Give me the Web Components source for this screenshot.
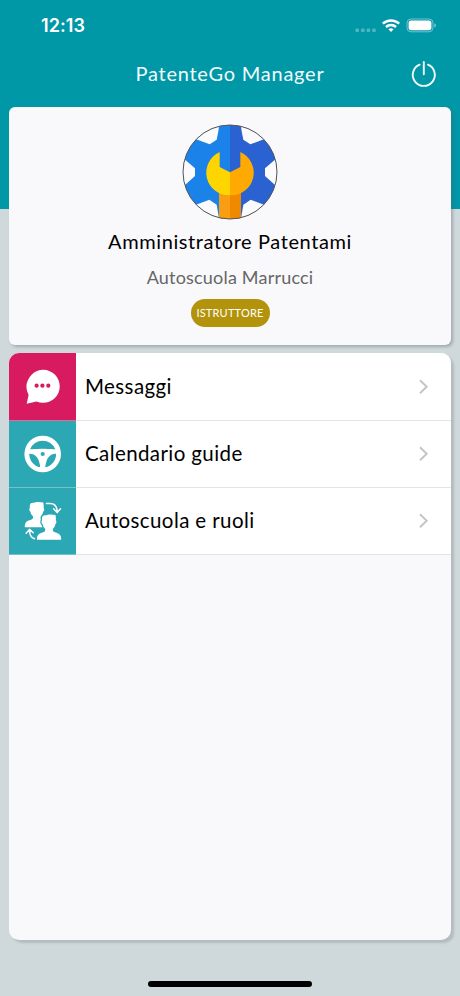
<!DOCTYPE html>
<html lang="it">
<head>
<meta charset="utf-8">
<title>PatenteGo Manager</title>
<style>
  html, body {
    height: 100%;
  }
  body {
    margin: 0;
    overflow: hidden;
    font-family: Lato, "Liberation Sans", sans-serif;
  }
</style>
</head>
<body>
<manager-app></manager-app>

<script>
class StatusBar extends HTMLElement {
  constructor(){
    super();
    this._root = this.attachShadow({mode: 'open'});
  }

  connectedCallback(){
    this._root.innerHTML = `
    <style>
      :host {
        display: flex;
        align-items: center;
        justify-content: space-between;
        box-sizing: border-box;
        height: 51px;
        padding: 0 22px 0 41px;
        color: #fff;
      }
      .time {
        font: 600 18px/50px Inter, sans-serif;
        letter-spacing: 0.1px;
      }
      svg {
        display: block;
      }
    </style>
    <span class="time">${this.getAttribute('time')}</span>
    <svg width="84" height="20" viewBox="0 0 84 20" fill="#fff">
      <g opacity=".3">
        <rect x="1.400" y="12.500" width="3.600" height="3.600" rx="1"/>
        <rect x="7" y="12.500" width="3.600" height="3.600" rx="1"/>
        <rect x="12.600" y="12.500" width="3.600" height="3.600" rx="1"/>
        <rect x="18.200" y="12.500" width="3.600" height="3.600" rx="1"/>
      </g>
      <g fill="none" stroke="#fff" stroke-width="2.500">
        <path d="M28.800 7.600a12.100 12.100 0 0 1 16.400 0"/>
        <path d="M32 11a7.400 7.400 0 0 1 10 0"/>
      </g>
      <path d="M34.400 13.300a4 4 0 0 1 5.200 0L37 16z"/>
      <rect x="53" y="3" width="26" height="12.800" rx="4" fill="none" stroke="#fff" stroke-opacity=".45"/>
      <rect x="54.600" y="4.600" width="22.800" height="9.600" rx="2.600"/>
      <path d="M80.400 7.200q1.600.8 1.600 2.200t-1.600 2.200z" opacity=".5"/>
    </svg>`;
  }
}

class NavBar extends HTMLElement {
  constructor(){
    super();
    this._root = this.attachShadow({mode: 'open'});
  }

  connectedCallback(){
    this._root.innerHTML = `
    <style>
      :host {
        display: grid;
        grid-template-columns: 44px 1fr 44px;
        align-items: center;
        height: 46px;
        padding: 0 14px;
        color: #f1fbfc;
      }
      .title {
        padding-bottom: 2px;
        text-align: center;
        font-size: 20px;
        line-height: 26px;
        letter-spacing: 0.75px;
      }
      button {
        display: flex;
        justify-content: center;
        padding: 0;
        border: 0;
        background: none;
        color: inherit;
      }
    </style>
    <span></span>
    <span class="title"><slot></slot></span>
    <button aria-label="Esci">
      <svg width="28" height="28" viewBox="0 0 28 28" fill="none" stroke="currentColor" stroke-width="1.900" stroke-linecap="round">
        <path d="M13.800 2v12.200M9.600 4.700a11 11 0 1 0 8.400 0"/>
      </svg>
    </button>`;
  }
}

class ProfileCard extends HTMLElement {
  constructor(){
    super();
    this._root = this.attachShadow({mode: 'open'});
  }

  connectedCallback(){
    this._root.innerHTML = `
    <style>
      :host {
        display: flex;
        flex-direction: column;
        align-items: center;
        box-sizing: border-box;
        height: 238px;
        padding-top: 17px;
        border-radius: 6px;
        background: #f9f9fc;
        box-shadow: 2px 2px 3px rgba(80, 95, 100, .35);
      }
      svg {
        display: block;
      }
      .name {
        margin-top: 7px;
        font-size: 20px;
        line-height: 28px;
        letter-spacing: 0.6px;
        color: #000;
      }
      .school {
        margin-top: 9px;
        font-size: 18px;
        line-height: 26px;
        letter-spacing: 0.2px;
        color: #666;
      }
      .role {
        margin-top: 9px;
        width: 79px;
        height: 28px;
        border-radius: 14px;
        background: #b3930b;
        color: #fff;
        text-align: center;
        font-size: 11px;
        line-height: 28px;
        letter-spacing: 0.2px;
      }
    </style>
    <svg width="96" height="96" viewBox="37 26 288 288">
      <clipPath id="round"><circle cx="181" cy="170" r="141"/></clipPath>
      <g clip-path="url(#round)">
        <path fill="#1a82e8" d="M37 26h144v288H37z"/>
        <path fill="#2a62d2" d="M181 26h144v288H181z"/>
        <g id="gaps" fill="#fbfbfd">
          <path d="M150 20L146 48 141 73 120 87 77 71 50 20z"/>
          <path d="M30 120L48 135 76 159V182L46 209 30 220z"/>
          <path d="M75 270L119 253 141 268 149 316 60 320z"/>
        </g>
        <use href="#gaps" transform="matrix(-1 0 0 1 362 0)"/>
        <path fill="#f99d12" d="M148 210h33v110h-33z"/>
        <path fill="#ef8a00" d="M181 210h33v110h-33z"/>
        <path fill="#ffd500" d="M150 110V155L181 171V240A68 68 0 0 1 150 110z"/>
        <path fill="#ffa903" d="M212 110V155L181 171V240A68 68 0 0 0 212 110z"/>
      </g>
      <circle cx="181" cy="170" r="141" fill="none" stroke="#555" stroke-width="3"/>
    </svg>
    <div class="name"><slot name="name"></slot></div>
    <div class="school"><slot name="school"></slot></div>
    <div class="role"><slot name="role"></slot></div>`;
  }
}

const ICONS = {
  chat: `
    <path d="M19 27A16.500 16.500 0 1 1 27.500 48.400L17.700 50.700 19.600 42Q15.500 34 19 27z"/>
    <g fill="var(--tile)">
      <circle cx="27.600" cy="32.700" r="2.100"/>
      <circle cx="33.400" cy="32.700" r="2.100"/>
      <circle cx="39.300" cy="32.700" r="2.100"/>
    </g>`,
  wheel: `
    <circle cx="33.700" cy="34" r="18.300"/>
    <g fill="var(--tile)">
      <path d="M21.100 29.300A13.500 13.500 0 0 1 46.300 29.300Q33.700 28 21.100 29.300z"/>
      <path d="M20.300 33.700C26.500 33.500 30.300 38 31.200 47.300A13.500 13.500 0 0 1 20.300 33.700z"/>
      <path d="M47.100 33.700C40.900 33.500 37.100 38 36.200 47.300A13.500 13.500 0 0 0 47.100 33.700z"/>
      <circle cx="33.700" cy="34" r="2.100"/>
    </g>`,
  roles: `
    <path id="bust" d="M15.800 40.200C15.600 35.800 17.500 34.200 20.500 33.300 22.800 32.600 23.800 32.200 24 31V29.300C22.400 28 21.600 26.500 21.400 24.600 20 23.800 20.100 21.500 20.900 20.800 20.200 17 22 15.500 24.500 15.900 27 14.700 31.500 15 34.300 15.600 34.600 17.500 34.900 19 34.600 20.800 35.400 21.500 35.500 23.800 34.200 24.600 34 26.500 33.200 28 31.700 29.300V31C31.900 32.200 32.900 32.600 35.200 33.300 38.200 34.200 40.200 35.800 40 40.200z"/>
    <use href="#bust" x="12.200" y="12.500" stroke="var(--tile)" stroke-width="2.600"/>
    <use href="#bust" x="12.200" y="12.500"/>
    <g fill="none" stroke="#fff" stroke-width="1.500" stroke-linecap="round" stroke-linejoin="round">
      <path d="M37.500 16.500H41Q48 16.500 48.200 25M44.600 21.800L48.200 25.600 51.500 21.800"/>
      <path d="M25.500 51.800Q20.300 50.500 20.600 42.500M17.200 46.200L20.600 42.200 24.200 45.700"/>
    </g>`
};

class MenuRow extends HTMLElement {
  constructor(){
    super();
    this._root = this.attachShadow({mode: 'open'});
  }

  connectedCallback(){
    this._root.innerHTML = `
    <style>
      :host {
        --tile: #2ca8b5;
        display: flex;
        align-items: center;
        box-sizing: border-box;
        height: 67px;
        border-bottom: 1px solid #e3e4e6;
        background: #fff;
      }
      :host(:first-child) {
        height: 68px;
      }
      :host([accent]) {
        --tile: #d81b60;
      }
      /* the colour runs on under part of the row's rule */
      .tile {
        display: flex;
        align-items: flex-end;
        align-self: stretch;
        width: 67px;
        flex: none;
        background: var(--tile);
        box-shadow: 0 1px color-mix(in srgb, var(--tile) 60%, #e3e4e6);
      }
      .label {
        flex: 1;
        padding: 0 0 2px 9px;
        font-size: 20.500px;
        line-height: 28px;
        letter-spacing: 0.4px;
        color: #000;
      }
      .chevron {
        margin-right: 21px;
      }
    </style>
    <div class="tile">
      <svg width="67" height="66" viewBox="0 1 67 66" fill="#fff">${ICONS[this.getAttribute('icon')]}</svg>
    </div>
    <span class="label"><slot></slot></span>
    <svg class="chevron" width="12" height="16" viewBox="0 0 12 16" fill="none" stroke="#c4c4c6" stroke-width="1.900">
      <path d="M2 1.200L8.700 7.700 2 14.200"/>
    </svg>`;
  }
}

class MenuList extends HTMLElement {
  constructor(){
    super();
    this._root = this.attachShadow({mode: 'open'});
  }

  connectedCallback(){
    this._root.innerHTML = `
    <style>
      :host {
        display: block;
        height: 587px;
        border-radius: 10px;
        background: #f9f9fc;
        box-shadow: 3px 3px 2px rgba(80, 95, 100, .22);
      }
      .rows {
        height: 100%;
        overflow: hidden;
        border-radius: inherit;
      }
    </style>
    <div class="rows"><slot></slot></div>`;
  }
}

class ManagerApp extends HTMLElement {
  constructor(){
    super();
    this._root = this.attachShadow({mode: 'open'});
  }

  connectedCallback(){
    this._root.innerHTML = `
    <style>
      :host {
        display: flex;
        flex-direction: column;
        box-sizing: border-box;
        height: 996px;
        padding-bottom: 9px;
        background: linear-gradient(#0097a7 209px, #cfd8db 209px);
      }
      main {
        display: flex;
        flex-direction: column;
        gap: 8px;
        padding: 10px 9px 0;
      }
      .home {
        width: 164px;
        height: 6px;
        margin: auto auto 0;
        border-radius: 3px;
        background: #000;
      }
    </style>
    <status-bar time="12:13"></status-bar>
    <nav-bar>PatenteGo Manager</nav-bar>
    <main>
      <profile-card>
        <span slot="name">Amministratore Patentami</span>
        <span slot="school">Autoscuola Marrucci</span>
        <span slot="role">ISTRUTTORE</span>
      </profile-card>
      <menu-list>
        <menu-row icon="chat" accent>Messaggi</menu-row>
        <menu-row icon="wheel">Calendario guide</menu-row>
        <menu-row icon="roles">Autoscuola e ruoli</menu-row>
      </menu-list>
    </main>
    <div class="home"></div>`;
  }
}

window.customElements.define('status-bar', StatusBar);
window.customElements.define('nav-bar', NavBar);
window.customElements.define('profile-card', ProfileCard);
window.customElements.define('menu-row', MenuRow);
window.customElements.define('menu-list', MenuList);
window.customElements.define('manager-app', ManagerApp);
</script>
</body>
</html>
